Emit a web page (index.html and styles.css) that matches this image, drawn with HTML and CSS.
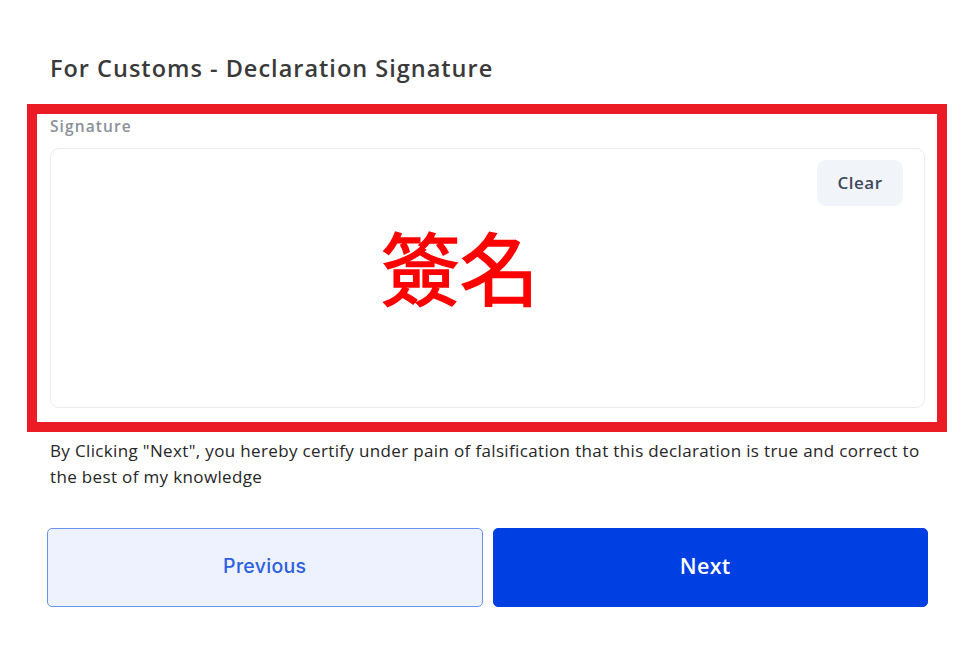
FILE: index.html
```html
<!DOCTYPE html>
<html lang="en">
<head>
<meta charset="utf-8">
<title>For Customs - Declaration Signature</title>
<link rel="stylesheet" href="styles.css">
</head>
<body>
<main class="page">
  <h1 class="title">For Customs - Declaration Signature</h1>
  <section class="highlight">
    <div class="label">Signature</div>
    <div class="pad">
      <button class="clear" type="button">Clear</button>
      <span class="note" lang="zh-Hant">簽名</span>
    </div>
  </section>
  <p class="disclaimer">By Clicking "Next", you hereby certify under pain of falsification that this declaration is true and correct to the best of my knowledge</p>
  <div class="actions">
    <button class="btn btn-prev" type="button">Previous</button>
    <button class="btn btn-next" type="button">Next</button>
  </div>
</main>
</body>
</html>
```
FILE: styles.css
```css
* { box-sizing: border-box; }
html, body { margin: 0; padding: 0; background: #ffffff; }
body {
  font-family: "Open Sans", "Noto Sans", "Liberation Sans", sans-serif;
  color: #333333;
}
.page {
  width: 881px;
  margin-left: 47px;
  padding-top: 53px;
}
.title {
  margin: 0 0 0 3px;
  font-size: 23.5px;
  line-height: 30px;
  font-weight: 600;
  letter-spacing: 1px;
  color: #3a3a3a;
}
.highlight {
  margin: 21px -19px 0 -20px;
  border: 10px solid #ec1c24;
  padding: 2px 12px 14px 13px;
}
.label {
  font-size: 15.5px;
  line-height: 21px;
  font-weight: 600;
  letter-spacing: 1.1px;
  color: #8a8f99;
  margin-bottom: 11px;
}
.pad {
  position: relative;
  height: 260px;
  border: 1.5px solid #ededed;
  border-radius: 9px;
  display: flex;
  justify-content: flex-end;
  align-items: flex-start;
  padding: 11px 21px 0 0;
}
.clear {
  width: 86px;
  height: 46px;
  border: none;
  border-radius: 9px;
  background: #f1f4f9;
  font-family: inherit;
  font-size: 17px;
  font-weight: 600;
  letter-spacing: 0.5px;
  color: #3e4a5c;
  padding-bottom: 3px;
}
.note {
  position: absolute;
  left: 330px;
  top: 72px;
  font-family: "Noto Sans CJK TC", "Noto Sans CJK SC", sans-serif;
  font-size: 79px;
  line-height: 90px;
  font-weight: 400;
  -webkit-text-stroke: 1.6px #ff0000;
  color: #ff0000;
}
.disclaimer {
  margin: 6px 0 0 3px;
  font-size: 17px;
  line-height: 26px;
  font-weight: 400;
  letter-spacing: 0.35px;
  color: #262626;
}
.actions {
  display: grid;
  grid-template-columns: 1fr 1fr;
  gap: 10px;
  margin-top: 38px;
}
.btn {
  height: 79px;
  border-radius: 5px;
  font-family: inherit;
  letter-spacing: 0.3px;
  padding-bottom: 5px;
}
.btn-prev {
  background: #edf2fe;
  border: 1.5px solid #6a93ee;
  color: #2d5fe0;
  font-family: "Inter", "Open Sans", sans-serif;
  font-size: 19.5px;
  font-weight: 500;
}
.btn-next {
  background: #0040e3;
  border: 1.5px solid #0040e3;
  color: #ffffff;
  font-size: 21.5px;
  font-weight: 600;
  text-indent: -10px;
}
```
